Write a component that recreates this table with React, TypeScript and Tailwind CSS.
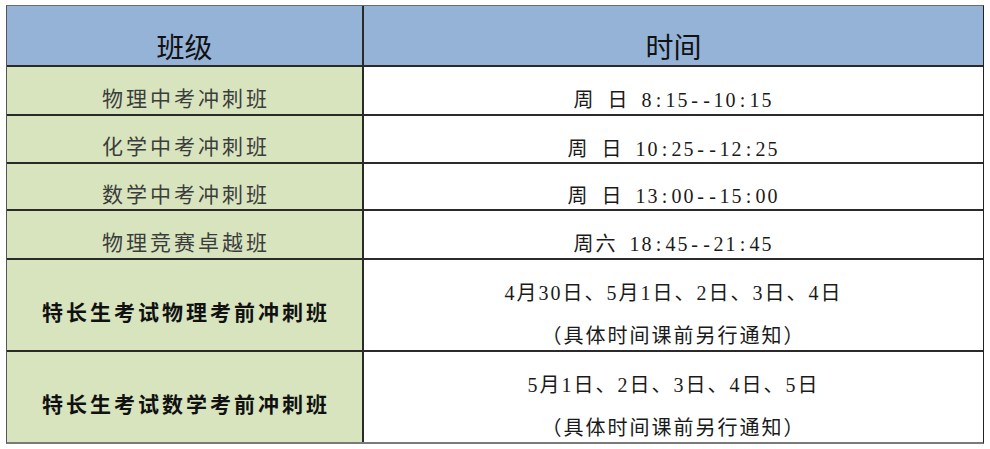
import React from "react";

const CJK = '"Noto Sans CJK SC", "Noto Sans", sans-serif';

function Serifish({ text }: { text: string }) {
  const parts: React.ReactNode[] = [];
  let buf = "";
  const flush = (k: number) => {
    if (buf) {
      parts.push(<span key={"c" + k}>{buf}</span>);
      buf = "";
    }
  };
  Array.from(text).forEach((ch, i) => {
    if (ch.charCodeAt(0) < 128) {
      flush(i);
      parts.push(
        <span
          key={i}
          className="inline-block w-[12px] text-center"
          style={{ fontFamily: '"Liberation Serif", serif' }}
        >
          {ch === " " ? "\u00a0" : ch}
        </span>
      );
    } else {
      buf += ch;
    }
  });
  flush(text.length + 1);
  return <>{parts}</>;
}

const rows: { name: string; bold?: boolean; lines: string[]; tall?: boolean }[] = [
  { name: "物理中考冲刺班", lines: ["周 日 8:15--10:15"] },
  { name: "化学中考冲刺班", lines: ["周 日 10:25--12:25"] },
  { name: "数学中考冲刺班", lines: ["周 日 13:00--15:00"] },
  { name: "物理竞赛卓越班", lines: ["周六 18:45--21:45"] },
  {
    name: "特长生考试物理考前冲刺班",
    bold: true,
    tall: true,
    lines: ["4月30日、5月1日、2日、3日、4日", "（具体时间课前另行通知）"],
  },
  {
    name: "特长生考试数学考前冲刺班",
    bold: true,
    tall: true,
    lines: ["5月1日、2日、3日、4日、5日", "（具体时间课前另行通知）"],
  },
];

export default function App() {
  return (
    <div className="w-[990px] h-[449px] bg-white overflow-hidden" style={{ fontFamily: CJK }}>
      <div className="ml-[6px] mt-[5px] w-[978px] border-t border-l border-r border-b-2 border-t-[#6b6b6b] border-l-[#555] border-r-[#222] border-b-[#7a7a7a]">
        <div className="grid grid-cols-[355px_619px] grid-rows-[59px_47px_46px_45px_47px_90px_90px] gap-[2px] bg-[#2a2a2a]">
          <div className="bg-[#95b3d7] flex items-center justify-center pt-[20px] text-[28px] text-[#111]">
            班级
          </div>
          <div className="bg-[#95b3d7] flex items-center justify-center pt-[20px] text-[28px] text-[#111]">
            时间
          </div>
          {rows.map((r, i) => (
            <React.Fragment key={i}>
              <div
                className={
                  r.bold
                    ? "bg-[#d7e4bd] flex items-center justify-center pt-[14px] pl-[3px] text-[21px] tracking-[3px] font-bold text-[#111]"
                    : "bg-[#d7e4bd] flex items-center justify-center pt-[14px] pl-[3px] text-[21px] tracking-[3px] text-[#3c3c3c]"
                }
              >
                {r.name}
              </div>
              <div
                className={
                  r.tall
                    ? "bg-white flex flex-col items-center justify-center pt-[16px] text-[20px] leading-[42px] tracking-[2px] text-[#1a1a1a]"
                    : "bg-white flex flex-col items-center justify-center pt-[18px] text-[20px] leading-[28px] tracking-[2px] text-[#1a1a1a]"
                }
              >
                {r.lines.map((l, j) => (
                  <div key={j} className="whitespace-nowrap">
                    <Serifish text={l} />
                  </div>
                ))}
              </div>
            </React.Fragment>
          ))}
        </div>
      </div>
    </div>
  );
}
